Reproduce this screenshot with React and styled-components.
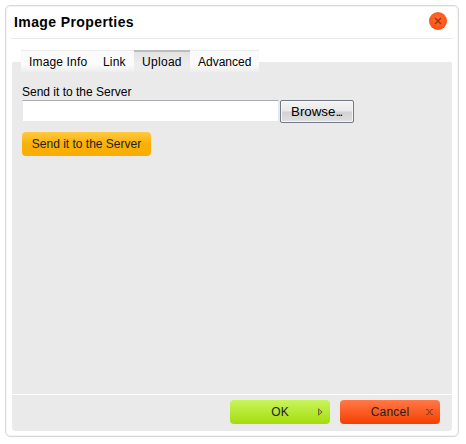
import React from "react";
import styled, { createGlobalStyle } from "styled-components";

const GlobalStyle = createGlobalStyle`
  * { box-sizing: border-box; }
  body {
    margin: 0;
    background: #fff;
    font-family: "Liberation Sans", Arial, sans-serif;
    font-size: 12px;
    color: #000;
  }
`;

const Page = styled.div`
  width: 466px;
  height: 444px;
  padding: 5px;
`;

const Dialog = styled.div`
  display: flex;
  flex-direction: column;
  width: 454px;
  height: 432px;
  padding: 0 6px 5px;
  border: 1px solid #d9d9d9;
  border-radius: 5px;
  box-shadow: inset 0 0 0 1px #f4f4f4;
`;

const TitleBar = styled.header`
  display: flex;
  justify-content: space-between;
  align-items: center;
  height: 33px;
  margin: 0 -1px;
  padding: 0 6px 1px 3px;
  border-bottom: 1px solid #ebebeb;
`;

const Title = styled.h1`
  margin: 0;
  font-size: 14px;
  line-height: 18px;
  letter-spacing: 0.4px;
`;

const CloseButton = styled.button`
  display: grid;
  place-items: center;
  width: 18px;
  height: 18px;
  margin-top: -1px;
  padding: 0;
  border: 0;
  border-radius: 50%;
  background: radial-gradient(circle at 50% 40%, #ff7038 0, #ff5a1c 50%, #fb3c00 100%);
`;

const Tabs = styled.nav`
  display: flex;
  align-self: flex-start;
  height: 22px;
  margin: 11px 0 -10px 9px;
  z-index: 1;
`;

const Tab = styled.button`
  height: 22px;
  width: ${(p) => p.$width}px;
  padding: 1px 0 0 8px;
  border: 0;
  border-top: ${(p) => (p.$active ? "2px solid #bcbcbc" : "1px solid #ededed")};
  background: ${(p) =>
    p.$active
      ? "linear-gradient(#e2e2e2, #ededed 60%, #ebebeb)"
      : "linear-gradient(#fafafa, #fbfbfb 65%, #ededed)"};
  color: #000;
  font: 12px/${(p) => (p.$active ? 19 : 20)}px "Liberation Sans", Arial, sans-serif;
  letter-spacing: ${(p) => p.$spacing || 0}px;
  text-align: left;
  white-space: nowrap;
`;

const Content = styled.main`
  display: flex;
  flex-direction: column;
  flex: 1;
  align-items: flex-start;
  padding: 22px 10px 0;
  border-radius: 2px 2px 0 0;
  background: #eaeaea;
`;

const Label = styled.label`
  height: 15px;
  line-height: 17px;
`;

const FileRow = styled.div`
  display: flex;
  align-items: center;
  gap: 1px;
  height: 24px;
`;

const FileInput = styled.input`
  width: 257px;
  height: 22px;
  padding: 0 3px;
  border: 1px solid #e3e9ef;
  border-top-color: #abadb3;
  border-radius: 1px;
  background: #fff;
  outline: 0;
`;

const BrowseButton = styled.button`
  width: 74px;
  height: 23px;
  padding: 1px 0 0 10px;
  border: 1px solid #707785;
  border-radius: 2px;
  background: linear-gradient(#f4f4f4 0, #e9e9e9 48%, #d2d2d4 52%, #e0e0e1 100%);
  box-shadow: inset 0 0 0 1px #f7f7f7;
  color: #000;
  font: 13.33px/20px "Liberation Sans", Arial, sans-serif;
  text-align: left;
`;

const Dots = styled.span`
  letter-spacing: -1.7px;
`;

const tones = {
  amber: ["#ffca42", "#fab005", "#f8ae00"],
  green: ["#c9f35c", "#b6e934", "#a3dc0b"],
  red: ["#ff7946", "#fc5b24", "#f24000"],
};

const ActionButton = styled.button`
  display: grid;
  grid-template-columns: 1fr;
  place-items: center;
  width: ${(p) => p.$width}px;
  height: 24px;
  padding: 0;
  border: 0;
  border-radius: 4px;
  background: linear-gradient(${(p) => tones[p.$tone].join(", ")});
  color: #222;
  font: 12px/22px "Liberation Sans", Arial, sans-serif;
  letter-spacing: ${(p) => p.$spacing || 0}px;

  > * { grid-area: 1 / 1; }
  > svg { justify-self: end; margin-right: 7px; }
`;

const UploadAction = styled.div`
  margin-top: 9px;
`;

const Footer = styled.footer`
  display: flex;
  justify-content: flex-end;
  gap: 10px;
  height: 37px;
  padding: 5px 12px 0 0;
  border-top: 1px solid #fff;
  border-radius: 0 0 4px 4px;
  background: #eaeaea;
  background-clip: padding-box;
`;

function CloseCross() {
  return (
    <svg width="8" height="8" viewBox="0 0 8 8">
      <path d="M1 1L7 7M7 1L1 7" stroke="#a13208" strokeWidth="1.5" />
    </svg>
  );
}

function CancelCross() {
  return (
    <svg width="7" height="6" viewBox="0 0 7 6" fill="none" stroke="#8c4420">
      <path d="M0 .5h1.5L3.5 3l2-2.5H7M0 5.5h1.5L3.5 3l2 2.5H7" strokeWidth="1.1" />
    </svg>
  );
}

function Arrow() {
  return (
    <svg width="5" height="8" viewBox="0 0 5 8">
      <path d="M.5.8v6.4L4.2 4z" fill="#b9b03f" stroke="#7b6a32" strokeWidth="1" />
    </svg>
  );
}

export default function App() {
  return (
    <Page>
      <GlobalStyle />
      <Dialog role="dialog">
        <TitleBar>
          <Title>Image Properties</Title>
          <CloseButton aria-label="Close">
            <CloseCross />
          </CloseButton>
        </TitleBar>
        <Tabs>
          <Tab $width={74} $spacing={0.15}>Image Info</Tab>
          <Tab $width={39} $spacing={0.2}>Link</Tab>
          <Tab $width={56} $spacing={0.3} $active>Upload</Tab>
          <Tab $width={69}>Advanced</Tab>
        </Tabs>
        <Content>
          <Label htmlFor="upload">Send it to the Server</Label>
          <FileRow>
            <FileInput id="upload" />
            <BrowseButton>Browse<Dots>...</Dots></BrowseButton>
          </FileRow>
          <UploadAction>
            <ActionButton $tone="amber" $width={129}>
              <span>Send it to the Server</span>
            </ActionButton>
          </UploadAction>
        </Content>
        <Footer>
          <ActionButton $tone="green" $width={100}>
            <span>OK</span>
            <Arrow />
          </ActionButton>
          <ActionButton $tone="red" $width={100} $spacing={0.2}>
            <span>Cancel</span>
            <CancelCross />
          </ActionButton>
        </Footer>
      </Dialog>
    </Page>
  );
}
